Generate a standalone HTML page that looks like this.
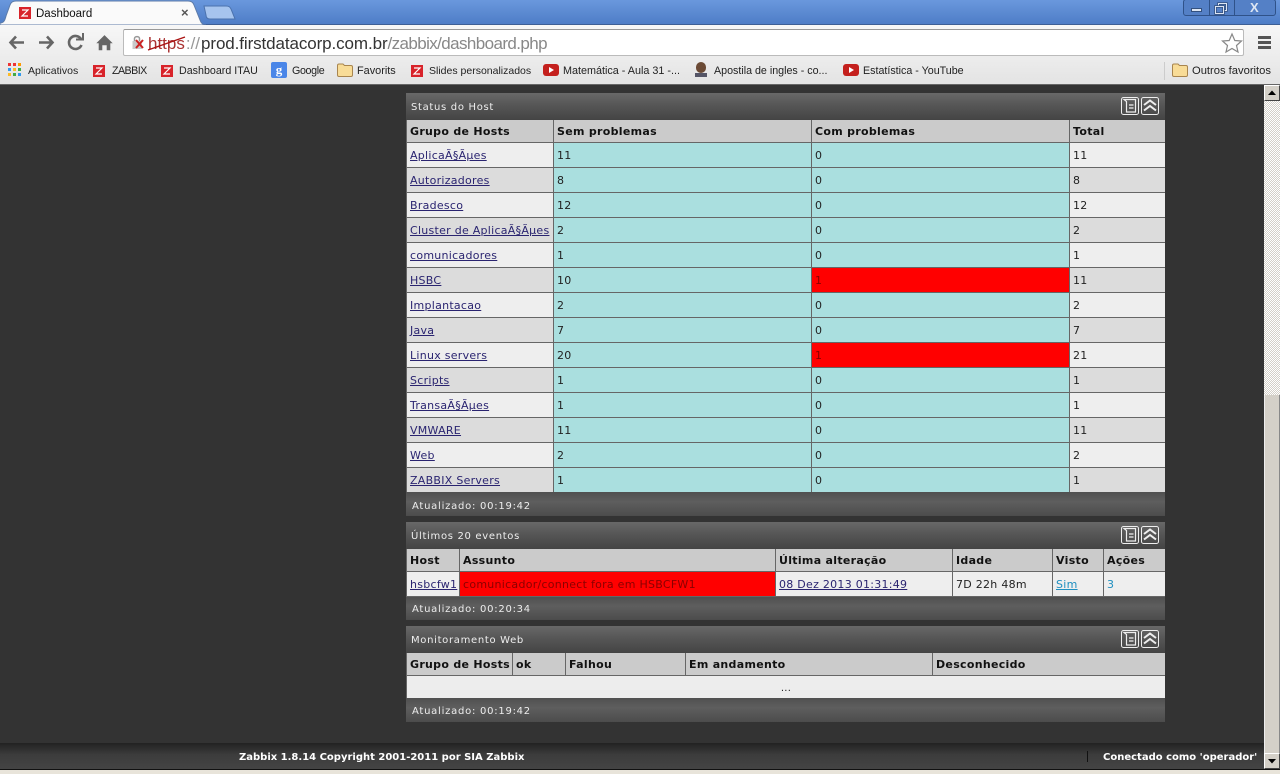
<!DOCTYPE html>
<html><head><meta charset="utf-8"><title>Dashboard</title>
<style>
html,body{margin:0;padding:0;width:1280px;height:774px;overflow:hidden;background:#333}
body{position:relative;font-family:"DejaVu Sans",sans-serif;font-size:11px;color:#111}
div,span,a,svg{position:absolute;white-space:nowrap}
a{color:#2a2470;text-decoration:underline}
.c{font-family:"Liberation Sans",sans-serif;font-size:10.7px;color:#222;top:64px;line-height:14px}
.bar{left:406px;width:759px;background:linear-gradient(#686868,#565656 45%,#444)}
.f{left:406px;width:759px;background:linear-gradient(#505050,#5e5e5e 40%,#4c4c4c)}
.t{color:#eee;font-size:10px;letter-spacing:.68px;line-height:13px}
.u{color:#eee;font-size:10px;letter-spacing:.75px;line-height:13px}
.h{background:#cbcbcb;height:22px;line-height:24px;font-weight:bold;font-size:11px;letter-spacing:.3px;color:#111;text-indent:3px;overflow:hidden}
.r{height:24px;line-height:26px;letter-spacing:.27px;text-indent:3px;overflow:hidden;color:#222}
.l{background:#eee}.d{background:#dcdcdc}.g{background:#aadfdf}.x{background:#f00;color:#8a0000}
.s{position:absolute;left:0;top:0}
.b{color:#fff;font-weight:bold;font-size:10px;line-height:13px;letter-spacing:0}
</style></head><body>

<!-- Browser chrome -->
<div style="left:0;top:0;width:1280px;height:25px;background:linear-gradient(#6a98dd,#4d7cc6)"></div>
<div style="left:0;top:24px;width:1280px;height:1px;background:#3d5f95"></div>
<svg class="s" width="240" height="26" style="left:0;top:0"><path d="M0 25V23C4 23 5 20 6 16L10 5C11 2 13 1 16 1H188C191 1 193 2 194 5L200 20C201 23 203 25 206 25Z" fill="#fafafa" stroke="#5d7ba8"/><path d="M204 6H226C229 6 230 7 231 9L235 19H210C207 19 206 17 206 15Z" fill="#a6c4ee" stroke="#4b72ad"/></svg>
<svg class="s" width="12" height="12" style="left:19px;top:7px"><rect width="12" height="12" fill="#d8232a"/><path d="M3 3H9L3 9H9" fill="none" stroke="#fff" stroke-width="1.200"/></svg>
<div style="left:36px;top:7px;font:11.5px/14px 'Liberation Sans',sans-serif;color:#111">Dashboard</div>
<div style="left:181px;top:5px;font:bold 13px/16px 'Liberation Sans',sans-serif;color:#555">×</div>
<div style="left:0;top:25px;width:1280px;height:60px;background:linear-gradient(#f7f7f7,#e3e3e3)"></div>
<div style="left:0;top:84px;width:1280px;height:1px;background:#666"></div>

<svg class="s" width="125" height="30" style="left:0;top:28px" fill="none" stroke="#666" stroke-width="2.6"><path d="M24 14.500H11M16 8.500L10.500 14.500L16 20.500"/><path d="M39 14.500H52M47 8.500L52.500 14.500L47 20.500"/><path d="M81 11A6.500 6.500 0 1 0 81.500 17"/><path d="M76 11.500H83V5" stroke-width="2"/><path d="M97 15L104.500 7.500L112 15H110V22H107V17H102V22H99V15Z" fill="#666" stroke-width=".6"/></svg>
<div style="left:123px;top:29px;width:1121px;height:27px;background:#fff;border:1px solid #bbb;border-top-color:#999;border-radius:2px;box-sizing:border-box"></div>
<svg class="s" width="18" height="18" style="left:130px;top:34px"><path d="M4.500 7V4.500C4.500 2 9.500 2 9.500 4.500V7" fill="none" stroke="#999" stroke-width="1.500"/><rect x="2.500" y="7" width="9.500" height="8" fill="#c9c9c9"/><path d="M6 6L13 14M13 6L6 14" stroke="#c22" stroke-width="2"/></svg>
<div style="left:148px;top:34px;font:17px/20px 'Liberation Sans',sans-serif;color:#a33">https<span style="position:static;color:#999;margin-left:1px">://</span><span style="position:static;color:#333;margin-left:1px;letter-spacing:-.1px">prod.firstdatacorp.com.br</span><span style="position:static;color:#888;letter-spacing:-.6px">/zabbix/dashboard.php</span></div>
<svg class="s" width="42" height="16" style="left:147px;top:36px"><path d="M1 14L38 1" stroke="#a11" stroke-width="1.300"/></svg>
<svg class="s" width="40" height="24" style="left:1215px;top:31px"><path d="M17 3L19.800 9.500L26.500 10L21.500 14.500L23 21L17 17.500L11 21L12.500 14.500L7.500 10L14.200 9.500Z" fill="#fff" stroke="#888" stroke-width="1.200"/></svg>
<div style="left:1258px;top:36px;width:13px;height:3px;background:#555"></div>
<div style="left:1258px;top:41px;width:13px;height:3px;background:#555"></div>
<div style="left:1258px;top:46px;width:13px;height:3px;background:#555"></div>

<div style="left:1183px;top:-1px;width:93px;height:17px;background:#5480c6;border:1px solid #2f5289;border-radius:3px;box-sizing:border-box"></div>
<div style="left:1209px;top:0;width:1px;height:16px;background:#2f5289"></div>
<div style="left:1234px;top:0;width:1px;height:16px;background:#2f5289"></div>
<div style="left:1191px;top:8px;width:11px;height:4px;background:#dde6f3;border:1px solid #34517f;box-sizing:border-box"></div>
<svg class="s" width="16" height="14" style="left:1214px;top:2px" fill="none"><rect x="4.500" y="1.500" width="8" height="7" stroke="#34517f" stroke-width="2.500"/><rect x="4.500" y="1.500" width="8" height="7" stroke="#dde6f3"/><rect x="1.500" y="4.500" width="8" height="7" fill="#5480c6" stroke="#34517f" stroke-width="2.500"/><rect x="1.500" y="4.500" width="8" height="7" stroke="#dde6f3"/></svg>
<div style="left:1250px;top:1px;font:bold 13px/14px 'Liberation Sans',sans-serif;color:#dde6f3">X</div>

<!-- Bookmarks -->
<svg class="s" width="13" height="13" style="left:8px;top:63px"><rect x="0" y="0" width="3" height="3" fill="#e33"/><rect x="5" y="0" width="3" height="3" fill="#e33"/><rect x="10" y="0" width="3" height="3" fill="#f90"/><rect x="0" y="5" width="3" height="3" fill="#39e"/><rect x="5" y="5" width="3" height="3" fill="#fb2"/><rect x="10" y="5" width="3" height="3" fill="#4a4"/><rect x="0" y="10" width="3" height="3" fill="#fb2"/><rect x="5" y="10" width="3" height="3" fill="#4a4"/><rect x="10" y="10" width="3" height="3" fill="#39e"/></svg>
<div class="c" style="left:28px;font-size:10.5px">Aplicativos</div>
<svg class="s" width="12" height="12" style="left:93px;top:65px"><rect width="12" height="12" fill="#d8232a"/><path d="M3 3H9L3 9H9" fill="none" stroke="#fff" stroke-width="1.200"/></svg>
<div class="c" style="left:112px;letter-spacing:-.55px">ZABBIX</div>
<svg class="s" width="12" height="12" style="left:161px;top:65px"><rect width="12" height="12" fill="#d8232a"/><path d="M3 3H9L3 9H9" fill="none" stroke="#fff" stroke-width="1.200"/></svg>
<div class="c" style="left:179px;font-size:10.7px">Dashboard ITAU</div>
<div style="left:271px;top:62px;width:16px;height:16px;background:#4a86e8;border-radius:2px;color:#fff;font:bold 13px/15px 'Liberation Serif',serif;text-align:center">g</div>
<div class="c" style="left:292px;letter-spacing:-.35px">Google</div>
<svg class="s" width="16" height="14" style="left:337px;top:63px"><path d="M.5 2.500C.5 1.500 1 1 2 1H6L7.500 2.500H14C15 2.500 15.500 3 15.500 4V12C15.500 13 15 13.500 14 13.500H2C1 13.500 .5 13 .5 12Z" fill="#f8dc97" stroke="#a8854e"/></svg>
<div class="c" style="left:357px;font-size:10.9px">Favorits</div>
<svg class="s" width="12" height="12" style="left:411px;top:65px"><rect width="12" height="12" fill="#d8232a"/><path d="M3 3H9L3 9H9" fill="none" stroke="#fff" stroke-width="1.200"/></svg>
<div class="c" style="left:429px;font-size:10.5px">Slides personalizados</div>
<svg class="s" width="16" height="12" style="left:543px;top:64px"><rect width="16" height="12" rx="3" fill="#c4201d"/><path d="M6 3L11 6L6 9Z" fill="#fff"/></svg>
<div class="c" style="left:563px;font-size:10.8px">Matemática - Aula 31 -...</div>
<div style="left:696px;top:62px;width:10px;height:11px;background:#6b4a35;border-radius:5px"></div><div style="left:695px;top:73px;width:12px;height:4px;background:#556"></div>
<div class="c" style="left:714px;font-size:10.7px">Apostila de ingles - co...</div>
<svg class="s" width="16" height="12" style="left:843px;top:64px"><rect width="16" height="12" rx="3" fill="#c4201d"/><path d="M6 3L11 6L6 9Z" fill="#fff"/></svg>
<div class="c" style="left:863px;font-size:10.7px">Estatística - YouTube</div>
<div style="left:1164px;top:62px;width:1px;height:18px;background:#ccc"></div>
<svg class="s" width="16" height="14" style="left:1172px;top:63px"><path d="M.5 2.500C.5 1.500 1 1 2 1H6L7.500 2.500H14C15 2.500 15.500 3 15.500 4V12C15.500 13 15 13.500 14 13.500H2C1 13.500 .5 13 .5 12Z" fill="#f8dc97" stroke="#a8854e"/></svg>
<div class="c" style="left:1192px;font-size:11.2px">Outros favoritos</div>

<!-- Page area -->
<div style="left:0;top:85px;width:1264px;height:658px;background:#333"></div>

<!-- Widget 1 -->
<div class="bar" style="top:93px;height:27px"></div>
<div class="t" style="left:411px;top:101px">Status do Host</div>
<div style="left:406px;top:120px;width:759px;height:373px;background:#666"></div>
<div class="h" style="left:407px;top:120px;width:146px">Grupo de Hosts</div>
<div class="h" style="left:554px;top:120px;width:257px">Sem problemas</div>
<div class="h" style="left:812px;top:120px;width:257px">Com problemas</div>
<div class="h" style="left:1070px;top:120px;width:95px">Total</div>

<div class="r l" style="left:407px;top:143px;width:146px"><a style="position:static">AplicaÃ§Ãµes</a></div><div class="r g" style="left:554px;top:143px;width:257px">11</div><div class="r g" style="left:812px;top:143px;width:257px">0</div><div class="r l" style="left:1070px;top:143px;width:95px">11</div>
<div class="r d" style="left:407px;top:168px;width:146px"><a style="position:static">Autorizadores</a></div><div class="r g" style="left:554px;top:168px;width:257px">8</div><div class="r g" style="left:812px;top:168px;width:257px">0</div><div class="r d" style="left:1070px;top:168px;width:95px">8</div>
<div class="r l" style="left:407px;top:193px;width:146px"><a style="position:static">Bradesco</a></div><div class="r g" style="left:554px;top:193px;width:257px">12</div><div class="r g" style="left:812px;top:193px;width:257px">0</div><div class="r l" style="left:1070px;top:193px;width:95px">12</div>
<div class="r d" style="left:407px;top:218px;width:146px"><a style="position:static">Cluster de AplicaÃ§Ãµes</a></div><div class="r g" style="left:554px;top:218px;width:257px">2</div><div class="r g" style="left:812px;top:218px;width:257px">0</div><div class="r d" style="left:1070px;top:218px;width:95px">2</div>
<div class="r l" style="left:407px;top:243px;width:146px"><a style="position:static">comunicadores</a></div><div class="r g" style="left:554px;top:243px;width:257px">1</div><div class="r g" style="left:812px;top:243px;width:257px">0</div><div class="r l" style="left:1070px;top:243px;width:95px">1</div>
<div class="r d" style="left:407px;top:268px;width:146px"><a style="position:static">HSBC</a></div><div class="r g" style="left:554px;top:268px;width:257px">10</div><div class="r x" style="left:812px;top:268px;width:257px">1</div><div class="r d" style="left:1070px;top:268px;width:95px">11</div>
<div class="r l" style="left:407px;top:293px;width:146px"><a style="position:static">Implantacao</a></div><div class="r g" style="left:554px;top:293px;width:257px">2</div><div class="r g" style="left:812px;top:293px;width:257px">0</div><div class="r l" style="left:1070px;top:293px;width:95px">2</div>
<div class="r d" style="left:407px;top:318px;width:146px"><a style="position:static">Java</a></div><div class="r g" style="left:554px;top:318px;width:257px">7</div><div class="r g" style="left:812px;top:318px;width:257px">0</div><div class="r d" style="left:1070px;top:318px;width:95px">7</div>
<div class="r l" style="left:407px;top:343px;width:146px"><a style="position:static">Linux servers</a></div><div class="r g" style="left:554px;top:343px;width:257px">20</div><div class="r x" style="left:812px;top:343px;width:257px">1</div><div class="r l" style="left:1070px;top:343px;width:95px">21</div>
<div class="r d" style="left:407px;top:368px;width:146px"><a style="position:static">Scripts</a></div><div class="r g" style="left:554px;top:368px;width:257px">1</div><div class="r g" style="left:812px;top:368px;width:257px">0</div><div class="r d" style="left:1070px;top:368px;width:95px">1</div>
<div class="r l" style="left:407px;top:393px;width:146px"><a style="position:static">TransaÃ§Ãµes</a></div><div class="r g" style="left:554px;top:393px;width:257px">1</div><div class="r g" style="left:812px;top:393px;width:257px">0</div><div class="r l" style="left:1070px;top:393px;width:95px">1</div>
<div class="r d" style="left:407px;top:418px;width:146px"><a style="position:static">VMWARE</a></div><div class="r g" style="left:554px;top:418px;width:257px">11</div><div class="r g" style="left:812px;top:418px;width:257px">0</div><div class="r d" style="left:1070px;top:418px;width:95px">11</div>
<div class="r l" style="left:407px;top:443px;width:146px"><a style="position:static">Web</a></div><div class="r g" style="left:554px;top:443px;width:257px">2</div><div class="r g" style="left:812px;top:443px;width:257px">0</div><div class="r l" style="left:1070px;top:443px;width:95px">2</div>
<div class="r d" style="left:407px;top:468px;width:146px"><a style="position:static">ZABBIX Servers</a></div><div class="r g" style="left:554px;top:468px;width:257px">1</div><div class="r g" style="left:812px;top:468px;width:257px">0</div><div class="r d" style="left:1070px;top:468px;width:95px">1</div>
<div class="f" style="top:492px;height:24px"></div>
<div class="u" style="left:412px;top:500px">Atualizado: 00:19:42</div>

<!-- Widget 2 -->
<div class="bar" style="top:522px;height:27px"></div>
<div class="t" style="left:411px;top:530px">Últimos 20 eventos</div>
<div style="left:406px;top:549px;width:759px;height:48px;background:#666"></div>
<div class="h" style="left:407px;top:549px;width:52px">Host</div>
<div class="h" style="left:460px;top:549px;width:315px">Assunto</div>
<div class="h" style="left:776px;top:549px;width:176px">Última alteração</div>
<div class="h" style="left:953px;top:549px;width:99px">Idade</div>
<div class="h" style="left:1053px;top:549px;width:50px">Visto</div>
<div class="h" style="left:1104px;top:549px;width:61px">Ações</div>
<div class="r l" style="left:407px;top:572px;width:52px"><a style="position:static">hsbcfw1</a></div>
<div class="r x" style="left:460px;top:572px;width:315px">comunicador/connect fora em HSBCFW1</div>
<div class="r l" style="left:776px;top:572px;width:176px"><a style="position:static">08 Dez 2013 01:31:49</a></div>
<div class="r l" style="left:953px;top:572px;width:99px">7D 22h 48m</div>
<div class="r l" style="left:1053px;top:572px;width:50px"><a style="position:static;color:#1f8fc0">Sim</a></div>
<div class="r l" style="left:1104px;top:572px;width:61px;color:#1f8fc0">3</div>
<div class="f" style="top:597px;height:23px"></div>
<div class="u" style="left:412px;top:603px">Atualizado: 00:20:34</div>

<!-- Widget 3 -->
<div class="bar" style="top:626px;height:27px"></div>
<div class="t" style="left:411px;top:634px">Monitoramento Web</div>
<div style="left:406px;top:653px;width:759px;height:46px;background:#666"></div>
<div class="h" style="left:407px;top:653px;width:105px">Grupo de Hosts</div>
<div class="h" style="left:513px;top:653px;width:52px">ok</div>
<div class="h" style="left:566px;top:653px;width:119px">Falhou</div>
<div class="h" style="left:686px;top:653px;width:246px">Em andamento</div>
<div class="h" style="left:933px;top:653px;width:232px">Desconhecido</div>
<div class="r" style="left:407px;top:676px;width:758px;height:22px;line-height:25px;background:#ededed;text-align:center;text-indent:0;font-size:10px">...</div>
<div class="f" style="top:698px;height:24px"></div>
<div class="u" style="left:412px;top:705px">Atualizado: 00:19:42</div>

<!-- widget buttons -->
<svg class="s" width="40" height="20" style="left:1121px;top:97px" fill="none" stroke="#eee"><rect x=".5" y=".5" width="17" height="17" rx="2"/><path d="M3 2.500H14.500V15H5.500V4.500Z" stroke-width="1.200"/><path d="M8 8H12.500M8 11H12.500" stroke-width="1.200"/><rect x="20.500" y=".5" width="17" height="17" rx="2"/><path d="M23 8L29 3.500L35 8M23 13.500L29 9L35 13.500" stroke-width="2"/></svg>
<svg class="s" width="40" height="20" style="left:1121px;top:526px" fill="none" stroke="#eee"><rect x=".5" y=".5" width="17" height="17" rx="2"/><path d="M3 2.500H14.500V15H5.500V4.500Z" stroke-width="1.200"/><path d="M8 8H12.500M8 11H12.500" stroke-width="1.200"/><rect x="20.500" y=".5" width="17" height="17" rx="2"/><path d="M23 8L29 3.500L35 8M23 13.500L29 9L35 13.500" stroke-width="2"/></svg>
<svg class="s" width="40" height="20" style="left:1121px;top:630px" fill="none" stroke="#eee"><rect x=".5" y=".5" width="17" height="17" rx="2"/><path d="M3 2.500H14.500V15H5.500V4.500Z" stroke-width="1.200"/><path d="M8 8H12.500M8 11H12.500" stroke-width="1.200"/><rect x="20.500" y=".5" width="17" height="17" rx="2"/><path d="M23 8L29 3.500L35 8M23 13.500L29 9L35 13.500" stroke-width="2"/></svg>

<!-- Page footer -->
<div style="left:0;top:743px;width:1264px;height:26px;background:linear-gradient(#222,#3c3c3c 45%,#444)"></div>
<div class="b" style="left:239px;top:751px">Zabbix 1.8.14 Copyright 2001-2011 por SIA Zabbix</div>
<div style="left:1087px;top:751px;width:1px;height:11px;background:#111"></div>
<div class="b" style="left:1103px;top:751px">Conectado como 'operador'</div>
<div style="left:0;top:769px;width:1280px;height:1px;background:#111"></div>
<div style="left:0;top:770px;width:1280px;height:4px;background:#e8e4da"></div>

<!-- Scrollbar -->
<svg class="s" width="16" height="684" style="left:1264px;top:85px"><pattern id="ck" width="2" height="2" patternUnits="userSpaceOnUse"><rect width="2" height="2" fill="#fff"/><rect width="1" height="1" fill="#d4d0c8"/><rect x="1" y="1" width="1" height="1" fill="#d4d0c8"/></pattern><rect width="16" height="684" fill="url(#ck)"/></svg>
<div style="left:1264px;top:395px;width:16px;height:358px;background:#d4d0c8;border-left:1px solid #eee;border-right:1px solid #888;box-sizing:border-box"></div>
<div style="left:1264px;top:85px;width:16px;height:16px;background:#d4d0c8;border:1px solid;border-color:#fff #444 #444 #fff;box-sizing:border-box"></div>
<div style="left:1264px;top:753px;width:16px;height:16px;background:#d4d0c8;border:1px solid;border-color:#fff #444 #444 #fff;box-sizing:border-box"></div>
<svg class="s" width="16" height="16" style="left:1264px;top:85px"><path d="M4 10H12L8 5.500Z" fill="#000"/></svg>
<svg class="s" width="16" height="16" style="left:1264px;top:753px"><path d="M4 6H12L8 10.500Z" fill="#000"/></svg>
</body></html>
